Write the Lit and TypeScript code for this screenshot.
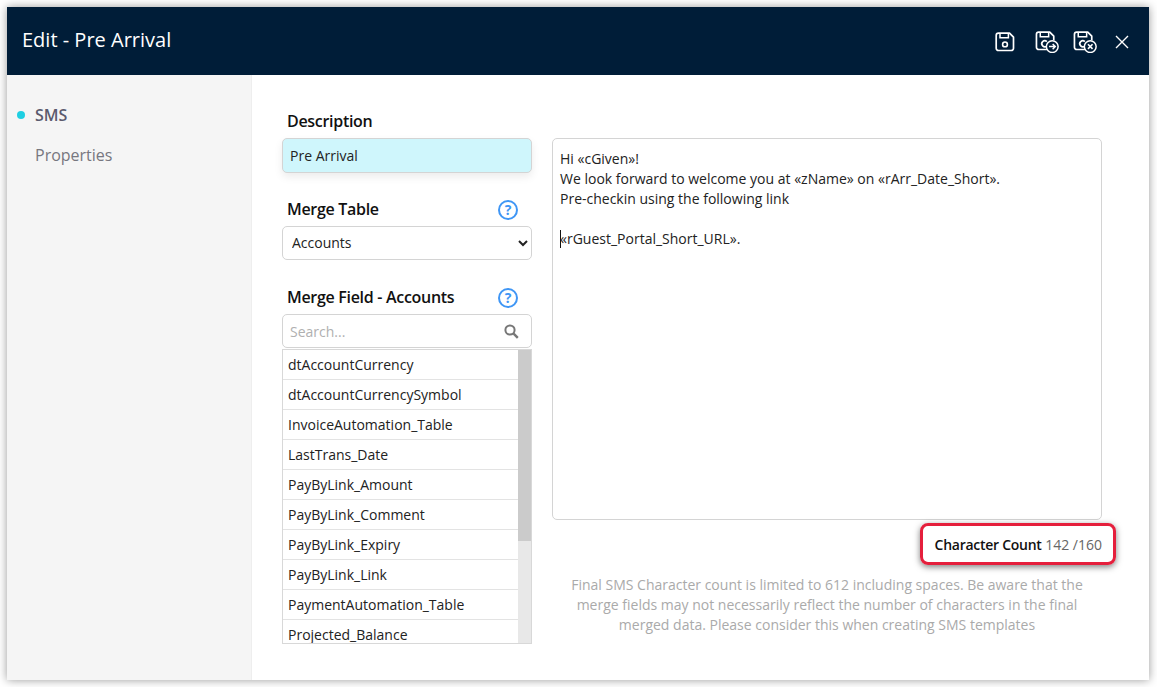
import { html, css, LitElement, svg } from 'lit';
import { customElement } from 'lit/decorators.js';
import { map } from 'lit/directives/map.js';

const FIELDS = [
  'dtAccountCurrency',
  'dtAccountCurrencySymbol',
  'InvoiceAutomation_Table',
  'LastTrans_Date',
  'PayByLink_Amount',
  'PayByLink_Comment',
  'PayByLink_Expiry',
  'PayByLink_Link',
  'PaymentAutomation_Table',
  'Projected_Balance',
];

// floppy body, with the corner cut away for the badge on the two "C" variants
const floppy = svg`
  <path d="M3.5 1.2h11l4 4v11a2.3 2.3 0 0 1-2.3 2.3H3.5a2.3 2.3 0 0 1-2.3-2.3V3.5a2.3 2.3 0 0 1 2.3-2.3z" fill="none" stroke="currentColor" stroke-width="1.7" stroke-linejoin="round"/>
  <path d="M5 1.5v4.2h8.4V1.5" fill="none" stroke="currentColor" stroke-width="1.5"/>
`;

const floppyC = svg`
  <path d="M12 18.5H3.5a2.3 2.3 0 0 1-2.3-2.3V3.5a2.3 2.3 0 0 1 2.3-2.3h11l4 4v4" fill="none" stroke="currentColor" stroke-width="1.7" stroke-linejoin="round"/>
  <path d="M5 1.5v4.2h8.4V1.5" fill="none" stroke="currentColor" stroke-width="1.5"/>
  <path d="M11.6 10.6a3 3 0 1 0 0 4.4" fill="none" stroke="currentColor" stroke-width="1.7"/>
  <circle cx="17" cy="15.6" r="5.9" fill="#001d38" stroke="currentColor" stroke-width="1.5"/>
`;

@customElement('app-root')
export class AppRoot extends LitElement {
  static styles = css`
    :host {
      display: block;
      box-sizing: border-box;
      height: 687px;
      padding: 7px 8px 7px 7px;
      background: #fff;
      overflow: hidden;
      font-family: 'Open Sans', 'Liberation Sans', sans-serif;
      font-size: 14px;
      color: #222;
    }
    .window {
      display: flex;
      flex-direction: column;
      height: 100%;
      background: #fff;
      box-shadow: 0 0 9px rgba(0, 0, 0, 0.4);
    }
    .header {
      flex: none;
      display: flex;
      align-items: center;
      justify-content: space-between;
      height: 68px;
      padding: 0 20px 0 15px;
      background: #001d38;
      color: #fff;
    }
    .title {
      margin-bottom: 3px;
      font-size: 20px;
    }
    .actions {
      display: flex;
      align-items: center;
      margin-top: 2px;
    }
    .actions svg {
      display: block;
      color: #fff;
    }
    .save {
      margin-right: 20px;
    }
    .save-next {
      margin-right: 14px;
    }
    .save-close {
      margin-right: 18px;
    }
    .body {
      flex: 1;
      display: flex;
      min-height: 0;
    }
    .side {
      flex: none;
      box-sizing: border-box;
      width: 245px;
      padding-top: 20px;
      background: #f5f5f5;
      border-right: 1px solid #eee;
    }
    .side-item {
      display: flex;
      align-items: center;
      height: 40px;
      padding-left: 10px;
      font-size: 16px;
      color: #77777f;
    }
    .side-item.active {
      font-weight: 600;
      color: #5b5b6e;
    }
    .dot {
      width: 8px;
      height: 8px;
      margin-right: 10px;
      border-radius: 50%;
      background: #1fcfe2;
    }
    .no-dot {
      width: 18px;
    }
    .main {
      flex: 1;
      display: grid;
      grid-template-columns: 250px 550px;
      column-gap: 20px;
      padding: 35px 0 0 30px;
      align-content: start;
    }
    .left {
      display: flex;
      flex-direction: column;
    }
    .label-row {
      display: flex;
      align-items: center;
      justify-content: space-between;
      height: 24px;
      padding: 0 14px 0 5px;
      margin-bottom: 4px;
      font-size: 16px;
      font-weight: 600;
      letter-spacing: -0.3px;
      line-height: 22px;
      color: #111;
    }
    .label-row span.text {
      margin-top: -2px;
    }
    .help {
      box-sizing: border-box;
      display: flex;
      align-items: center;
      justify-content: center;
      width: 20px;
      height: 20px;
      border: 2px solid #3f96f5;
      border-radius: 50%;
      font-size: 14px;
      font-weight: 700;
      letter-spacing: 0;
      color: #3f96f5;
    }
    input,
    select {
      box-sizing: border-box;
      display: block;
      width: 100%;
      font: inherit;
      color: #222;
      outline: none;
      border: 1px solid #d4d4d4;
      border-radius: 5px;
      background: #fff;
    }
    .description {
      height: 35px;
      padding: 0 7px;
      margin-bottom: 25px;
      background: #cff6fc;
      box-shadow: 0 4px 8px rgba(0, 0, 0, 0.08);
    }
    .table-select {
      height: 34px;
      padding: 0 5px 2px;
      margin-bottom: 26px;
    }
    .search {
      position: relative;
      margin-bottom: 1px;
    }
    .search input {
      height: 34px;
      padding: 0 36px 0 7px;
    }
    .search input::placeholder {
      color: #b0b0b0;
    }
    .search svg {
      position: absolute;
      right: 13px;
      top: 10px;
    }
    .list {
      box-sizing: border-box;
      display: flex;
      height: 295px;
      border: 1px solid #d8d8d8;
      overflow: hidden;
    }
    .rows {
      flex: 1;
      min-width: 0;
    }
    .row {
      box-sizing: border-box;
      height: 30px;
      padding-left: 5px;
      line-height: 29px;
      border-bottom: 1px solid #e3e3e3;
      white-space: nowrap;
    }
    .scrollbar {
      flex: none;
      width: 13px;
      background: #e8e8e8;
    }
    .thumb {
      height: 191px;
      background: #cbcbcb;
    }
    .right {
      display: flex;
      flex-direction: column;
      padding-top: 28px;
    }
    .editor {
      box-sizing: border-box;
      height: 382px;
      padding: 10px 7px;
      border: 1px solid #d4d4d4;
      border-radius: 5px;
      line-height: 20px;
      white-space: pre-wrap;
      color: #222;
    }
    .caret {
      display: inline-block;
      width: 1px;
      height: 18px;
      margin-right: -1px;
      vertical-align: -4px;
      background: #111;
    }
    .count-row {
      display: flex;
      justify-content: flex-end;
      margin-top: 3px;
    }
    .count {
      box-sizing: border-box;
      display: flex;
      align-items: center;
      height: 42px;
      padding: 0 11px 0 12px;
      margin-right: -14px;
      border: 3px solid #e51f3c;
      border-radius: 8px;
      box-shadow: 0 2px 6px rgba(0, 0, 0, 0.5);
      color: #666;
      white-space: pre;
    }
    .count b {
      font-weight: 600;
      letter-spacing: -0.27px;
      color: #111;
    }
    .note {
      margin-top: 10px;
      line-height: 20px;
      text-align: center;
      color: #aaa;
    }
  `;

  render() {
    return html`
      <div class="window">
        <div class="header">
          <div class="title">Edit - Pre Arrival</div>
          <div class="actions">
            <svg class="save" width="20" height="20" viewBox="0 0 20 20">
              ${floppy}
              <circle cx="10" cy="12.4" r="2.4" fill="none" stroke="currentColor" stroke-width="1.6" />
            </svg>
            <svg class="save-next" width="24" height="22" viewBox="0 0 23.5 22">
              ${floppyC}
              <path d="M13.8 15.6h6M17.4 12.9l2.6 2.7-2.6 2.7" fill="none" stroke="currentColor" stroke-width="1.5" />
            </svg>
            <svg class="save-close" width="24" height="22" viewBox="0 0 23.5 22">
              ${floppyC}
              <path d="M14.7 13.3l4.6 4.6M19.3 13.3l-4.6 4.6" fill="none" stroke="currentColor" stroke-width="1.6" />
            </svg>
            <svg width="14" height="14" viewBox="0 0 14 14">
              <path d="M1 1l12 12M13 1L1 13" fill="none" stroke="currentColor" stroke-width="1.4" />
            </svg>
          </div>
        </div>
        <div class="body">
          <div class="side">
            <div class="side-item active"><span class="dot"></span>SMS</div>
            <div class="side-item"><span class="no-dot"></span>Properties</div>
          </div>
          <div class="main">
            <div class="left">
              <div class="label-row"><span class="text">Description</span></div>
              <input class="description" .value=${'Pre Arrival'} />
              <div class="label-row"><span class="text">Merge Table</span><span class="help">?</span></div>
              <select class="table-select"><option>Accounts</option></select>
              <div class="label-row"><span class="text">Merge Field - Accounts</span><span class="help">?</span></div>
              <div class="search">
                <input placeholder="Search..." />
                <svg width="15" height="15" viewBox="0 0 15 15">
                  <circle cx="6" cy="6" r="4.6" fill="none" stroke="#777" stroke-width="2" />
                  <path d="M9.6 9.6l4.2 4.2" fill="none" stroke="#777" stroke-width="2.4" />
                </svg>
              </div>
              <div class="list">
                <div class="rows">
                  ${map(FIELDS, f => html`<div class="row">${f}</div>`)}
                </div>
                <div class="scrollbar"><div class="thumb"></div></div>
              </div>
            </div>
            <div class="right">
              <div class="editor">Hi «cGiven»!
We look forward to welcome you at «zName» on «rArr_Date_Short».
Pre-checkin using the following link

<span class="caret"></span>«rGuest_Portal_Short_URL».</div>
              <div class="count-row">
                <div class="count"><b>Character Count</b> 142 /160</div>
              </div>
              <div class="note">
                Final SMS Character count is limited to 612 including spaces. Be aware that the
                merge fields may not necessarily reflect the number of characters in the final
                merged data. Please consider this when creating SMS templates
              </div>
            </div>
          </div>
        </div>
      </div>
    `;
  }
}
